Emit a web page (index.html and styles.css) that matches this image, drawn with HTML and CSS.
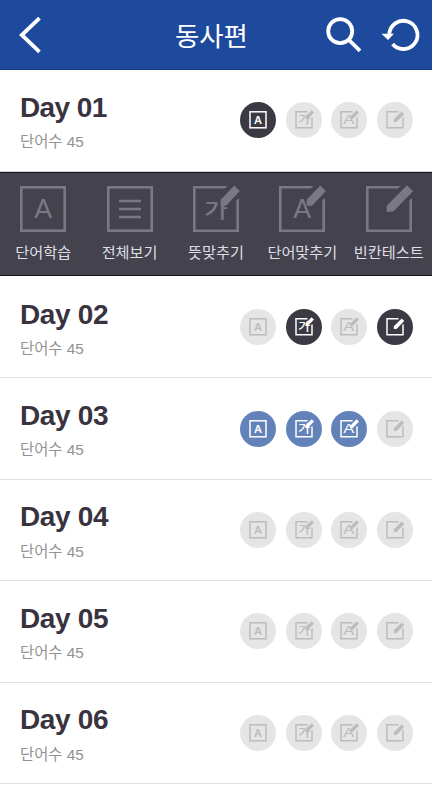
FILE: index.html
```html
<!DOCTYPE html>
<html lang="ko">
<head>
<meta charset="utf-8">
<title>동사편</title>
<link rel="stylesheet" href="styles.css">
</head>
<body>
<svg class="defs" aria-hidden="true">
  <symbol id="s-a" viewBox="0 0 36 36">
    <rect class="ln" x="10" y="9.8" width="16" height="16"/>
    <text class="glyph bold" x="18" y="21.8" font-size="11">A</text>
  </symbol>
  <symbol id="s-frame" viewBox="0 0 36 36">
    <path class="ln" d="M21.5 9.8H10V25.8H26V15.5"/>
  </symbol>
  <symbol id="s-ga" viewBox="0 0 36 36">
    <use href="#s-frame"/>
    <text class="glyph ko" x="18.2" y="21.8" font-size="11" textLength="12" lengthAdjust="spacingAndGlyphs">가</text>
    <path class="fl" d="M25.6 8.2L28 10.6L21.8 17H19.4V14.6Z"/>
  </symbol>
  <symbol id="s-ap" viewBox="0 0 36 36">
    <use href="#s-frame"/>
    <text class="glyph" x="17.8" y="22" font-size="12" textLength="11" lengthAdjust="spacingAndGlyphs">A</text>
    <path class="fl" d="M25.6 8.2L28 10.6L21.8 17H19.4V14.6Z"/>
  </symbol>
  <symbol id="s-pen" viewBox="0 0 36 36">
    <use href="#s-frame"/>
    <path class="fl" d="M24.8 9.6L27.2 12L19.6 19.9H16.8V17.3Z"/>
  </symbol>
  <symbol id="b-frame" viewBox="-2 -2 50 50">
    <path class="fl" d="M0 0H34.5L31.5 2.6H2.6V43.4H43.4V14.6L46 12V46H0Z"/>
  </symbol>
</svg>

<header class="bar">
  <svg class="back" viewBox="0 0 24 38"><path d="M20.5 2.2L2.8 19L20.5 35.8"/></svg>
  <h1>동사편</h1>
  <div class="actions">
    <svg class="search" viewBox="0 0 36 36"><circle cx="14.2" cy="14.2" r="12"/><path d="M23 23L34 33.8"/></svg>
    <svg class="reload" viewBox="0 0 36 36"><path d="M6.3 17.5A14.1 14.1 0 1 1 9.6 27"/><path class="head" d="M-1.5 16.8H11L5 23Z"/></svg>
  </div>
</header>

<main>
  <section class="row first">
    <div class="info"><h2>Day 01</h2><p>단어수 45</p></div>
    <div class="dots">
      <svg class="dot dark"><use href="#s-a"/></svg><svg class="dot"><use href="#s-ga"/></svg><svg class="dot"><use href="#s-ap"/></svg><svg class="dot"><use href="#s-pen"/></svg>
    </div>
  </section>

  <nav class="panel">
    <a><svg viewBox="-2 -2 50 50"><rect class="ln" x="1.3" y="1.3" width="43.4" height="43.4"/><text class="glyph thin" x="23.3" y="32" font-size="26.5">A</text></svg><span>단어학습</span></a>
    <a><svg viewBox="-2 -2 50 50"><rect class="ln" x="1.3" y="1.3" width="43.4" height="43.4"/><path class="ln" d="M12 15H34M12 23H34M12 31H34"/></svg><span>전체보기</span></a>
    <a><svg viewBox="-2 -2 50 50"><use href="#b-frame" x="-2" y="-2" width="50" height="50"/><text class="glyph ko" x="23" y="31" font-size="21" textLength="24" lengthAdjust="spacingAndGlyphs">가</text><path class="fl" d="M41.3 -.5L46.8 5L33 19.7H27.7V13.7Z"/></svg><span>뜻맞추기</span></a>
    <a><svg viewBox="-2 -2 50 50"><use href="#b-frame" x="-2" y="-2" width="50" height="50"/><text class="glyph thin" x="23.3" y="32" font-size="26.5">A</text><path class="fl" d="M41.3 -.5L46.8 5L33 19.7H27.7V13.7Z"/></svg><span>단어맞추기</span></a>
    <a><svg viewBox="-2 -2 50 50"><use href="#b-frame" x="-2" y="-2" width="50" height="50"/><path class="fl" d="M41 -.7L47 5.3L27.3 25.6L20.7 26V19.7Z"/></svg><span>빈칸테스트</span></a>
  </nav>

  <section class="row">
    <div class="info"><h2>Day 02</h2><p>단어수 45</p></div>
    <div class="dots">
      <svg class="dot"><use href="#s-a"/></svg><svg class="dot dark"><use href="#s-ga"/></svg><svg class="dot"><use href="#s-ap"/></svg><svg class="dot dark"><use href="#s-pen"/></svg>
    </div>
  </section>
  <section class="row">
    <div class="info"><h2>Day 03</h2><p>단어수 45</p></div>
    <div class="dots">
      <svg class="dot blue"><use href="#s-a"/></svg><svg class="dot blue"><use href="#s-ga"/></svg><svg class="dot blue"><use href="#s-ap"/></svg><svg class="dot"><use href="#s-pen"/></svg>
    </div>
  </section>
  <section class="row">
    <div class="info"><h2>Day 04</h2><p>단어수 45</p></div>
    <div class="dots">
      <svg class="dot"><use href="#s-a"/></svg><svg class="dot"><use href="#s-ga"/></svg><svg class="dot"><use href="#s-ap"/></svg><svg class="dot"><use href="#s-pen"/></svg>
    </div>
  </section>
  <section class="row">
    <div class="info"><h2>Day 05</h2><p>단어수 45</p></div>
    <div class="dots">
      <svg class="dot"><use href="#s-a"/></svg><svg class="dot"><use href="#s-ga"/></svg><svg class="dot"><use href="#s-ap"/></svg><svg class="dot"><use href="#s-pen"/></svg>
    </div>
  </section>
  <section class="row">
    <div class="info"><h2>Day 06</h2><p>단어수 45</p></div>
    <div class="dots">
      <svg class="dot"><use href="#s-a"/></svg><svg class="dot"><use href="#s-ga"/></svg><svg class="dot"><use href="#s-ap"/></svg><svg class="dot"><use href="#s-pen"/></svg>
    </div>
  </section>
</main>
</body>
</html>
```
FILE: styles.css
```css
* { box-sizing: border-box; margin: 0; padding: 0; }
html, body { height: 800px; overflow: hidden; }
body { background: #fff; font-family: "Liberation Sans", "Noto Sans CJK KR", sans-serif; color: #38333f; }
.defs { display: none; }

.bar {
  display: grid;
  grid-template-columns: 156px 1fr auto;
  align-items: center;
  height: 70px;
  padding: 0 13px 0 19px;
  background: #1e4a9e;
  border-bottom: 1px solid #143a8c;
}
.bar svg { fill: none; stroke: #fff; stroke-width: 3.8; overflow: visible; }
.back { width: 24px; height: 38px; }
.bar h1 { font-size: 26.4px; font-weight: 400; line-height: 40px; color: #fff; padding-top: 4px; }
.actions { display: flex; gap: 21px; }
.actions svg { width: 36px; height: 36px; }
.bar .head { fill: #fff; stroke: none; }

.row {
  display: flex;
  justify-content: space-between;
  align-items: flex-start;
  height: 101.4px;
  padding: 0 19px 0 20px;
  border-bottom: 1px solid #e2e2e5;
}
.panel + .row { height: 102.4px; padding-top: 1px; }
.row.first { height: 102px; border-bottom-color: #d4d3dd; }
.info h2 { padding-top: 21.5px; font-size: 28px; line-height: 32px; letter-spacing: -.35px; }
.first h2 { letter-spacing: -.6px; }
.info p { margin-top: 6.5px; font-size: 15.4px; line-height: 24px; color: #929292; }
.dots { display: flex; gap: 9.67px; padding-top: 32.3px; }
.dot { width: 36px; height: 36px; border-radius: 50%; background: #e5e5e6; color: #bcbcbd; }
.dot.dark { background: #3a3944; color: #fff; }
.dot.blue { background: #6482ba; color: #fff; }

.ln { fill: none; stroke: currentColor; stroke-width: 1.5; }
.fl { fill: currentColor; }
.glyph { fill: currentColor; text-anchor: middle; font-family: "Liberation Sans", sans-serif; }
.bold { font-family: Inter, sans-serif; font-weight: 600; }
.ko { font-family: "Noto Sans CJK KR", sans-serif; font-weight: 500; }
.thin { font-family: Lato, sans-serif; font-weight: 400; }

.panel {
  display: grid;
  grid-template-columns: repeat(5, 86.4px);
  height: 104px;
  padding-top: 11px;
  background: #43424d;
  border-top: 1px solid #15141c;
  border-bottom: 1px solid #15141c;
}
.panel a { display: flex; flex-direction: column; align-items: center; color: #797884; }
.panel svg { width: 50px; height: 50px; }
.panel .ln { stroke-width: 2.6; }
.panel span { margin-top: 7px; font-size: 15.2px; line-height: 24px; color: #dedee5; white-space: nowrap; }
```
